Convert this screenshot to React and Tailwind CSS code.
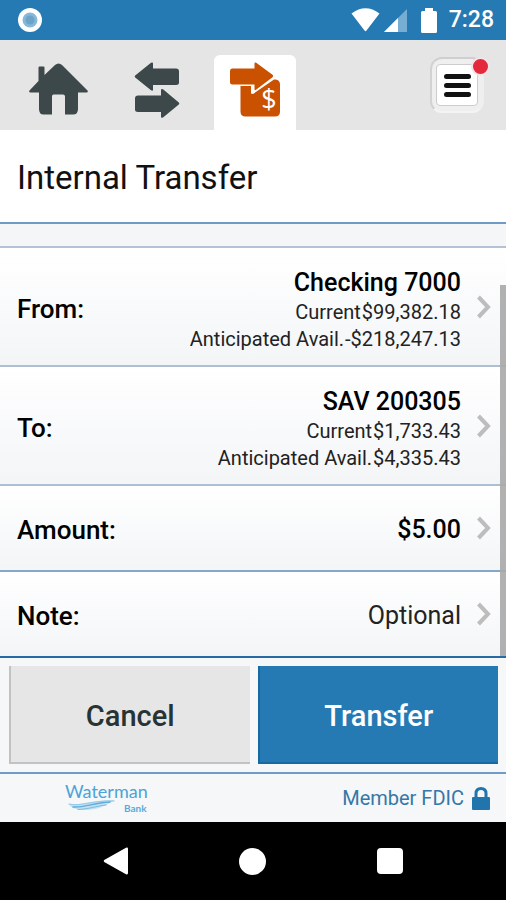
import { useState } from 'react'

const tabs = [
  { id: 'home', label: 'Home', Icon: HomeIcon },
  { id: 'transfers', label: 'Transfers', Icon: ArrowsIcon },
  { id: 'internal', label: 'Internal transfer', Icon: TransferIcon },
]

const accounts = [
  {
    label: 'From:',
    name: 'Checking 7000',
    lines: [
      ['Current', '$99,382.18'],
      ['Anticipated Avail.', '-$218,247.13'],
    ],
  },
  {
    label: 'To:',
    name: 'SAV 200305',
    lines: [
      ['Current', '$1,733.43'],
      ['Anticipated Avail.', '$4,335.43'],
    ],
  },
]

function HomeIcon() {
  return (
    <svg width="60" height="54" viewBox="0 0 60 54" fill="#3c4849" aria-hidden="true">
      <path d="M9.500 5.500Q9.500 4.500 10.500 4.500H14.500Q15.500 4.500 15.500 5.500V13L26 3Q29.500 0 33 3L58.500 28.500Q59.500 30.500 57.500 30.500H49V47Q49 52.500 44 52.500H36V34.500Q36 32.500 34 32.500H24.500Q23 32.500 23 34.500V52.500H14.500Q10 52.500 10 47V30.500H1.500Q-0.500 30.500 0.500 28.500L9.500 19Z" />
    </svg>
  )
}

function ArrowsIcon() {
  return (
    <svg width="46" height="56" viewBox="0 0 46 56" fill="#3c4849" aria-hidden="true">
      <path d="M1.200 15.500Q0.300 14.500 1.200 13.500L17 0.800Q19 -0.200 19 1.500V6.500H42Q45 6.500 45 9.500V20.500Q45 23 42 23H19V27.500Q19 29.500 17 28.300Z" />
      <path d="M44.800 42.500Q45.700 41.500 44.800 40.500L29 27.300Q27 26.300 27 28.300V33.500H4Q1 33.500 1 36.500V47.500Q1 50 4 50H27V54.500Q27 56.500 29 55.500Z" />
    </svg>
  )
}

function TransferIcon() {
  return (
    <svg width="50" height="55" viewBox="0 0 50 55" aria-hidden="true">
      <path fill="#c95100" d="M10.500 24H21V31.500L23 32L44 17.500H45.500Q50 18 50 22.500V49.500Q50 54.500 45 54.500H15.500Q10.500 54.500 10.500 49.500Z" />
      <path fill="#c95100" d="M2 6.500H24.500V1.500Q24.500 -0.300 26.200 0.800L42.500 12.800Q43.800 14 42.500 15.200L26 27.800Q24.500 28.800 24.500 27V22.500H2.500Q0 22.500 0 20V9Q0 6.500 2 6.500Z" />
      <text x="39" y="47" textAnchor="middle" fill="#fff" fontSize="27" fontFamily="'Open Sans', sans-serif">$</text>
    </svg>
  )
}

function Chevron() {
  return (
    <svg className="shrink-0" width="16" height="24" viewBox="0 0 16 24" fill="none" stroke="#bdbdbd" strokeWidth="4" aria-hidden="true">
      <path d="M2.500 2L12 12L2.500 22" />
    </svg>
  )
}

function StatusBar() {
  return (
    <div className="flex h-10 items-center bg-[#267ab3] pr-3 pl-[18px] text-white">
      <svg width="24" height="24" viewBox="0 0 24 24" aria-hidden="true">
        <circle cx="12" cy="12" r="12" fill="#fff" />
        <circle cx="12" cy="12" r="7.500" fill="#88b8d8" />
        <circle cx="12" cy="12" r="4.500" fill="#6ba4c8" />
      </svg>
      <div className="ml-auto flex items-center">
        <svg width="29" height="24" viewBox="0 0 29 24" fill="#fff" aria-hidden="true">
          <path d="M0.500 5.500Q14.500 -5 28.500 5.500L15.500 22.500Q14.500 24 13.500 22.500Z" />
        </svg>
        <svg className="ml-1" width="23" height="24" viewBox="0 0 23 24" aria-hidden="true">
          <path fill="#77add2" d="M0 24L23 1V24Z" />
          <path fill="#fff" d="M0 24L14 10V24Z" />
        </svg>
        <svg className="ml-3.5" width="16" height="25" viewBox="0 0 16 25" fill="#fff" aria-hidden="true">
          <path d="M4 0H12V3H14.500Q16 3 16 4.500V23.500Q16 25 14.500 25H1.500Q0 25 0 23.500V4.500Q0 3 1.500 3H4Z" />
        </svg>
        <span className="ml-3 text-[23px] font-medium">7:28</span>
      </div>
    </div>
  )
}

function TopTabs() {
  const [active, setActive] = useState('internal')

  return (
    <div className="flex items-center justify-between bg-[#e5e5e5] pr-[22px] pl-[18px]">
      <nav className="flex gap-4 pt-[15px]">
        {tabs.map(({ id, label, Icon }) => (
          <button
            key={id}
            type="button"
            aria-label={label}
            onClick={() => setActive(id)}
            className={`flex h-[75px] w-[82px] justify-center rounded-t-md pt-[7px] ${
              active === id ? 'bg-white' : ''
            }`}
          >
            <Icon />
          </button>
        ))}
      </nav>
      <button
        type="button"
        aria-label="Menu"
        className="relative flex h-14 w-[54px] items-center justify-center rounded-xl border-2 border-t-[#cfcfcf] border-r-[#efefef] border-b-[#f4f4f4] border-l-[#d2d2d2] bg-[#efefef]"
      >
        <span className="flex size-[42px] flex-col items-center justify-center gap-1 rounded border border-[#cdcdcd] bg-white">
          <span className="h-[5px] w-[27px] rounded-full bg-[#111]" />
          <span className="h-[5px] w-[27px] rounded-full bg-[#111]" />
          <span className="h-[5px] w-[27px] rounded-full bg-[#111]" />
        </span>
        <span className="absolute -top-0.5 -right-2 size-[19px] rounded-full border-2 border-[#f3e4e5] bg-[#e3293b]" />
      </button>
    </div>
  )
}

function Row({ label, className, children }) {
  return (
    <button
      type="button"
      className={`flex w-full items-center border-b-2 bg-linear-to-b from-white to-[#f3f5f7] pr-3.5 pl-[17px] text-left ${className}`}
    >
      <span className="pt-1 text-[26px] leading-8 font-medium">{label}</span>
      <span className="mr-[15px] ml-auto text-right">{children}</span>
      <Chevron />
    </button>
  )
}

function TransferRows() {
  return (
    <div className="relative">
      {accounts.map((account) => (
        <Row key={account.label} label={account.label} className="border-[#adbfd2]">
          <span className="block pt-[19px] text-[25px] leading-8 font-medium">{account.name}</span>
          <span className="block pb-3">
            {account.lines.map(([name, value]) => (
              <span key={name} className="flex justify-end gap-px text-xl leading-[27px] text-[#222]">
                <span>{name}</span>
                <span>{value}</span>
              </span>
            ))}
          </span>
        </Row>
      ))}
      <Row label="Amount:" className="border-[#83a8cb]">
        <span className="block pt-7 pb-6 text-[25px] leading-8 font-medium">$5.00</span>
      </Row>
      <Row label="Note:" className="border-[#2669a3]">
        <span className="block pt-7 pb-6 text-[25px] leading-8 text-[#222]">Optional</span>
      </Row>
      {/* scroll thumb */}
      <div className="absolute top-[37px] right-0 bottom-0.5 w-1.5 bg-[#a9a9a9]/90" />
    </div>
  )
}

function BankLogo() {
  return (
    <svg width="90" height="36" viewBox="0 0 90 36" role="img" aria-label="Waterman Bank">
      <text x="1" y="18" fill="#4ba3d6" fontSize="18" fontFamily="Lato, sans-serif">Waterman</text>
      <text x="60" y="32" fill="#5aabd9" fontSize="10" fontWeight="700" fontFamily="Lato, sans-serif">Bank</text>
      <path fill="#c3e0f2" d="M4 24C16 26 26 20 51 20C44 24 36 30 20 30C12 30 7 27 4 24Z" />
      <g fill="none" strokeLinecap="round">
        <path stroke="#93c8e8" d="M5 24C17 27 28 20 50 21" />
        <path stroke="#5fadd9" strokeWidth="1.500" d="M9 27C20 28 28 23 46 22" />
        <path stroke="#7cbbe0" d="M14 29.500C26 29 32 26 42 25" />
      </g>
    </svg>
  )
}

function Footer() {
  return (
    <footer className="flex h-[50px] items-center justify-between border-t-2 border-[#6f9bc6] bg-[#f5f7f9] pr-4 pl-16">
      <BankLogo />
      <div className="flex items-center gap-2 text-[#3577a8]">
        <span className="text-xl">Member FDIC</span>
        <svg width="18" height="23" viewBox="0 0 18 23" aria-hidden="true">
          <path fill="none" stroke="#2175ac" strokeWidth="3" d="M4 12V6.500Q4 1.500 9 1.500T14 6.500V12" />
          <rect y="10" width="18" height="13" rx="1" fill="#2175ac" />
        </svg>
      </div>
    </footer>
  )
}

function SystemNav() {
  return (
    <div className="flex h-[78px] items-center justify-around bg-black px-12">
      <button type="button" aria-label="Back">
        <svg width="26" height="28" viewBox="0 0 26 28" fill="#fff" aria-hidden="true">
          <path d="M1.200 15Q0.200 14 1.200 13L23 0.800Q25 0 25 2V26Q25 28 23 27.200Z" />
        </svg>
      </button>
      <button type="button" aria-label="Home screen" className="size-[27px] rounded-full bg-white" />
      <button type="button" aria-label="Recent apps" className="size-[26px] rounded-sm bg-white" />
    </div>
  )
}

export default function App() {
  return (
    <div className="flex min-h-screen flex-col bg-[#f5f7f9] font-['Roboto',sans-serif] text-black">
      <StatusBar />
      <TopTabs />
      <main className="flex-1">
        <h1 className="border-b-2 border-[#6f9bc6] bg-white px-[17px] pt-7 pb-6 text-[33px] leading-10 text-[#111]">
          Internal Transfer
        </h1>
        <div className="h-6 border-b-2 border-[#b3c3d5] bg-[#f5f6f8]" />
        <TransferRows />
        <div className="grid grid-cols-2 gap-2 py-2 pr-2 pl-[9px]">
          <button
            type="button"
            className="border-b-2 border-l-2 border-[#c2c2c2] bg-[#e6e6e6] pt-[34px] pb-[30px] text-[29px] leading-8 font-medium text-[#273334]"
          >
            Cancel
          </button>
          <button
            type="button"
            className="border-b-2 border-l-2 border-[#1769a4] bg-[#267ab3] pt-[34px] pb-[30px] text-[29px] leading-8 font-medium text-white"
          >
            Transfer
          </button>
        </div>
      </main>
      <Footer />
      <SystemNav />
    </div>
  )
}
